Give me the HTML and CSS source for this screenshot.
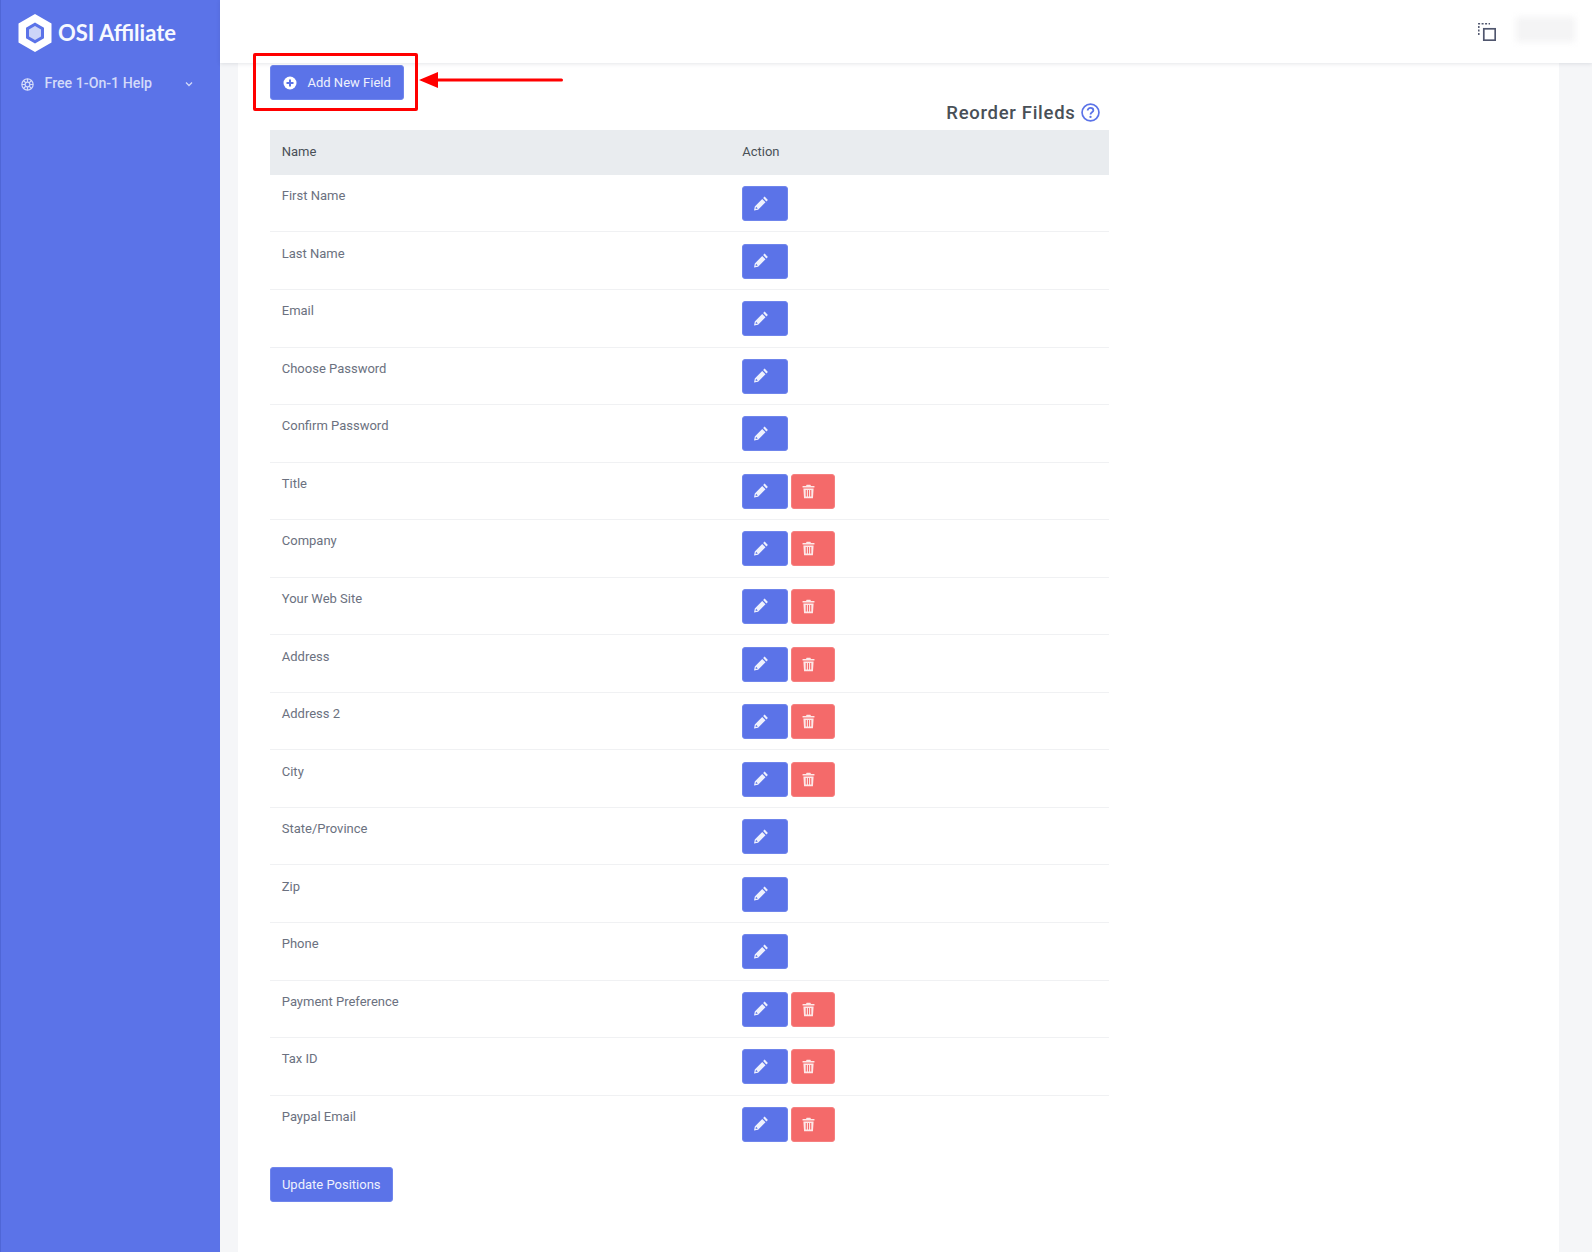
FILE: index.html
```html
<!DOCTYPE html>
<html lang="en">
<head>
<meta charset="utf-8">
<title>Reorder Fields</title>
<link rel="stylesheet" href="styles.css">
</head>
<body>
<svg class="sprite" width="0" height="0" aria-hidden="true">
  <symbol id="pencil" viewBox="0 0 16 16"><path fill="currentColor" d="M11.6 .6 14.9 3.900 13.400 5.400 10.100 2.100ZM9.200 3 12.500 6.300 5.100 13.700 1 14.500 1.800 10.400ZM3 10.700 2.600 12.900 4.800 12.500Z"/></symbol>
  <symbol id="trash" viewBox="0 0 14 16"><path fill="currentColor" fill-rule="evenodd" d="M5 0.800H9L9.700 2.200H13.400V3.800H0.600V2.200H4.300ZM1.500 4.800H12.500L11.800 15.200H2.200ZM4 6.500V13.500H5.200V6.500ZM6.400 6.500V13.500H7.600V6.500ZM8.800 6.500V13.500H10V6.500Z"/></symbol>
</svg>
<div class="app">
  <aside class="sidebar">
    <div class="brand">
      <svg class="brand-mark" viewBox="0 0 33 38"><path fill="#fff" fill-rule="evenodd" d="M16.500 0 33 9.500V28.500L16.500 38 0 28.500V9.500ZM16.500 8.500 7.500 13.700V24.300L16.500 29.500 25.500 24.300V13.700Z"/><path fill="#cdd5f8" d="M16.500 12 10.500 15.500V22.500L16.500 26 22.500 22.500V15.500Z"/></svg>
      <span class="brand-name">OSI Affiliate</span>
    </div>
    <div class="menu-item">
      <svg class="menu-icon" viewBox="0 0 12 12"><g fill="none" stroke="currentColor" stroke-width="1.100"><circle cx="6" cy="6" r="5.200"/><circle cx="6" cy="6" r="2.200"/><path d="M6 .8V3.800M6 8.200V11.200M.8 6H3.800M8.200 6H11.200M2.300 2.300 4.400 4.400M7.600 7.600 9.700 9.700M9.700 2.300 7.600 4.400M4.400 7.600 2.300 9.700"/></g></svg>
      <span class="menu-label">Free 1-On-1 Help</span>
      <svg class="menu-chevron" viewBox="0 0 8 6"><path fill="none" stroke="currentColor" stroke-width="1.300" d="M1 1.500 4 4.500 7 1.500"/></svg>
    </div>
  </aside>
  <div class="main">
    <header class="topbar">
      <svg class="topbar-icon" viewBox="0 0 18 18"><path fill="none" stroke="#50566e" stroke-width="1.500" stroke-dasharray="2 1.500" d="M.8 12V.8H12"/><rect x="5.800" y="5.800" width="11.400" height="11.400" fill="none" stroke="#50566e" stroke-width="1.700"/></svg>
      <div class="topbar-user"></div>
    </header>
    <div class="content">
      <section class="card">
        <div class="card-actions">
          <button class="btn btn-add">
            <svg class="plus" viewBox="0 0 14 14"><circle cx="7" cy="7" r="6.500" fill="#fff"/><path stroke="#5b73e8" stroke-width="2" d="M7 3.500V10.500M3.500 7H10.500"/></svg>
            Add New Field
          </button>
        </div>
        <div class="reorder-row">
          <h2 class="reorder-title">Reorder Fileds</h2>
          <svg class="help" viewBox="0 0 18 18"><circle cx="9" cy="9" r="8" fill="none" stroke="#5b73e8" stroke-width="1.600"/><path fill="none" stroke="#5b73e8" stroke-width="1.700" d="M6.300 7.200C6.300 5.600 7.500 4.700 9 4.700 10.600 4.700 11.700 5.700 11.700 7 11.700 8.800 9 8.900 9 10.900"/><circle cx="9" cy="13.200" r="1.100" fill="#5b73e8"/></svg>
        </div>
        <table class="fields">
          <thead>
            <tr><th class="col-name">Name</th><th>Action</th></tr>
          </thead>
          <tbody>
            <tr><td>First Name</td><td><button class="btn-icon edit"><svg class="ico"><use href="#pencil"/></svg></button></td></tr>
            <tr><td>Last Name</td><td><button class="btn-icon edit"><svg class="ico"><use href="#pencil"/></svg></button></td></tr>
            <tr><td>Email</td><td><button class="btn-icon edit"><svg class="ico"><use href="#pencil"/></svg></button></td></tr>
            <tr><td>Choose Password</td><td><button class="btn-icon edit"><svg class="ico"><use href="#pencil"/></svg></button></td></tr>
            <tr><td>Confirm Password</td><td><button class="btn-icon edit"><svg class="ico"><use href="#pencil"/></svg></button></td></tr>
            <tr><td>Title</td><td><button class="btn-icon edit"><svg class="ico"><use href="#pencil"/></svg></button><button class="btn-icon del"><svg class="ico-trash"><use href="#trash"/></svg></button></td></tr>
            <tr><td>Company</td><td><button class="btn-icon edit"><svg class="ico"><use href="#pencil"/></svg></button><button class="btn-icon del"><svg class="ico-trash"><use href="#trash"/></svg></button></td></tr>
            <tr><td>Your Web Site</td><td><button class="btn-icon edit"><svg class="ico"><use href="#pencil"/></svg></button><button class="btn-icon del"><svg class="ico-trash"><use href="#trash"/></svg></button></td></tr>
            <tr><td>Address</td><td><button class="btn-icon edit"><svg class="ico"><use href="#pencil"/></svg></button><button class="btn-icon del"><svg class="ico-trash"><use href="#trash"/></svg></button></td></tr>
            <tr><td>Address 2</td><td><button class="btn-icon edit"><svg class="ico"><use href="#pencil"/></svg></button><button class="btn-icon del"><svg class="ico-trash"><use href="#trash"/></svg></button></td></tr>
            <tr><td>City</td><td><button class="btn-icon edit"><svg class="ico"><use href="#pencil"/></svg></button><button class="btn-icon del"><svg class="ico-trash"><use href="#trash"/></svg></button></td></tr>
            <tr><td>State/Province</td><td><button class="btn-icon edit"><svg class="ico"><use href="#pencil"/></svg></button></td></tr>
            <tr><td>Zip</td><td><button class="btn-icon edit"><svg class="ico"><use href="#pencil"/></svg></button></td></tr>
            <tr><td>Phone</td><td><button class="btn-icon edit"><svg class="ico"><use href="#pencil"/></svg></button></td></tr>
            <tr><td>Payment Preference</td><td><button class="btn-icon edit"><svg class="ico"><use href="#pencil"/></svg></button><button class="btn-icon del"><svg class="ico-trash"><use href="#trash"/></svg></button></td></tr>
            <tr><td>Tax ID</td><td><button class="btn-icon edit"><svg class="ico"><use href="#pencil"/></svg></button><button class="btn-icon del"><svg class="ico-trash"><use href="#trash"/></svg></button></td></tr>
            <tr><td>Paypal Email</td><td><button class="btn-icon edit"><svg class="ico"><use href="#pencil"/></svg></button><button class="btn-icon del"><svg class="ico-trash"><use href="#trash"/></svg></button></td></tr>
          </tbody>
        </table>
        <button class="btn btn-update">Update Positions</button>
      </section>
    </div>
  </div>
</div>
<div class="annot-box"></div>
<svg class="annot-arrow" viewBox="0 0 144 16"><path fill="#f00" d="M0 8 19 0V6.500H142.500A1.500 1.500 0 0 1 142.500 9.500H19V16Z"/></svg>
</body>
</html>
```
FILE: styles.css
```css
* { box-sizing: border-box; }
html, body { margin: 0; height: 100%; }
body {
  position: relative;
  overflow: hidden;
  background: #f5f6f8;
  color: #6b7180;
  font-family: Roboto, "Liberation Sans", sans-serif;
  font-size: 13px;
  line-height: 1.5;
}
.sprite { position: absolute; }
.app { display: flex; height: 1252px; }

.sidebar {
  flex: 0 0 220px;
  background: #5b73e8;
  border-left: 1px solid #4f66d6;
  color: #d3daf9;
}
.brand { display: flex; align-items: center; gap: 6px; padding: 14px 0 0 17px; height: 52px; }
.brand-mark { width: 34px; height: 38px; flex: none; }
.brand-name { font-family: Lato, sans-serif; font-size: 22px; line-height: 38px; font-weight: 700; color: #f6f8ff; }
.menu-item { display: flex; align-items: center; margin-top: 22px; padding-left: 20px; height: 20px; }
.menu-icon { width: 13px; height: 13px; flex: none; }
.menu-label { margin-left: 10.500px; width: 140px; font-size: 14.200px; font-weight: 500; white-space: nowrap; }
.menu-chevron { width: 8px; height: 6px; flex: none; }

.main { flex: 1; min-width: 0; display: flex; flex-direction: column; }
.topbar {
  position: relative;
  z-index: 2;
  flex: 0 0 63px;
  display: flex;
  align-items: flex-start;
  justify-content: flex-end;
  background: #fff;
  box-shadow: 0 1px 4px rgba(40, 50, 70, .12);
  padding: 17px 17px 0 0;
}
.topbar-icon { width: 18px; height: 18px; margin: 6px 20px 0 0; }
.topbar-user { width: 59px; height: 25px; background: #f4f4f5; filter: blur(3px); }

.content { flex: 1; padding: 0 33px 0 18px; min-height: 0; }
.card { background: #fff; height: 100%; padding: 2px 32px 0 32px; }

.card-actions { height: 35px; }
.btn {
  display: inline-flex;
  align-items: center;
  height: 35px;
  padding: 0 12px;
  border: 1px solid #6f85ec;
  border-radius: 3px;
  background: #5b73e8;
  color: #eef1fd;
  font: 400 13px/1.5 Roboto, sans-serif;
  white-space: nowrap;
}
.btn-add { width: 134px; gap: 11px; padding-left: 11.500px; }
.plus { width: 14px; height: 14px; flex: none; }
.annot-box { position: absolute; z-index: 3; left: 253px; top: 53px; width: 165px; height: 58px; border: 3.500px solid #f00; border-radius: 2px; }
.annot-arrow { position: absolute; z-index: 3; left: 419px; top: 72px; width: 144px; height: 16px; }

.reorder-row { display: flex; align-items: center; justify-content: flex-end; gap: 5px; width: 838.500px; height: 30px; padding: 0 9px 5px 0; }
.reorder-title { margin: 0; color: #495057; font-size: 18.500px; font-weight: 500; line-height: 24px; letter-spacing: .7px; }
.help { width: 19px; height: 19px; flex: none; }

.fields { width: 838.500px; border-collapse: collapse; table-layout: fixed; }
.fields th {
  padding: 11.500px 11.250px 13.900px 11.750px;
  background: #e9ecef;
  color: #495057;
  font-weight: 400;
  text-align: left;
}
.col-name { width: 460.500px; }
.fields td { padding: 11.250px 11.250px 10.300px 11.750px; border-bottom: 1px solid #f0f1f3; vertical-align: top; }
.fields td button { vertical-align: top; }
.fields tbody tr:last-child td { border-bottom: 0; }

.btn-icon {
  display: inline-flex;
  align-items: center;
  justify-content: flex-start;
  height: 35px;
  margin-right: 3px;
  border-radius: 3px;
  color: #fff;
}
.edit { width: 46px; padding: 0 0 0 9.500px; background: #5b73e8; border: 1px solid #6f85ec; }
.del { width: 44px; padding: 0 0 0 10px; background: #f46a6a; border: 1px solid #f67f7f; }
.ico { width: 16px; height: 16px; color: #eef1fd; }
.ico-trash { width: 13px; height: 15px; color: #fde8e8; }

.btn-update { margin-top: 14.500px; width: 122.500px; justify-content: center; padding: 1px 0 0; }
```
